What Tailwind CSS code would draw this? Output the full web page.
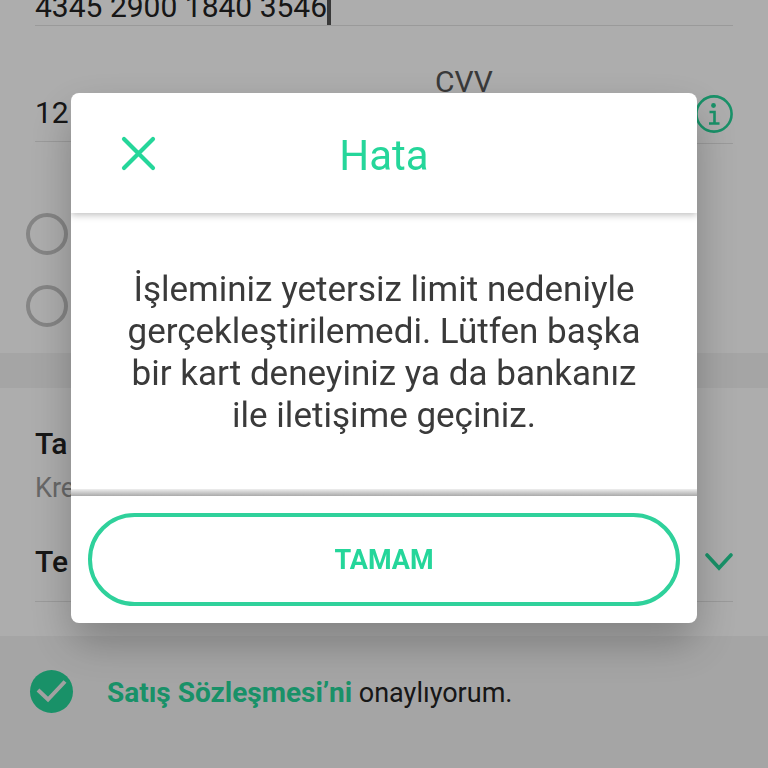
<!DOCTYPE html>
<html lang="tr">
<head>
    <meta charset="UTF-8">
    <meta name="viewport" content="width=device-width, initial-scale=1.0">
    <title>Hata</title>
    <script src="https://cdn.jsdelivr.net/npm/@tailwindcss/browser@4"></script>
</head>
<body class="min-h-screen bg-[#f4f4f4] font-['Roboto',sans-serif] text-[#222] overflow-hidden">
    <main class="bg-white">
        <!-- Card number -->
        <div class="px-[35px]">
            <div class="h-[26px] flex items-end overflow-hidden border-b border-[#e4e4e4]">
                <input type="text" aria-label="Kart numarası" value="4345 2900 1840 3546" class="field-sizing-content h-9 text-[30px] leading-9 outline-none">
                <span class="h-9 w-1 bg-[#555]"></span>
            </div>
        </div>

        <!-- Expiry date and CVV -->
        <div class="px-[35px] pt-[38px] grid grid-cols-[1fr_298px] gap-x-24">
            <div class="pt-[31px] border-b border-[#e4e4e4] h-[78px]">
                <input type="text" aria-label="Ay" value="12" class="w-full text-[30px] leading-9 outline-none">
            </div>
            <div class="border-b border-[#e4e4e4] h-20">
                <label for="cvv" class="block h-[31px] text-[30px] leading-9 text-[#555]">CVV</label>
                <div class="flex items-center">
                    <input type="text" id="cvv" class="min-w-0 grow h-9 text-[30px] leading-9 outline-none">
                    <button type="button" aria-label="Bilgi" class="text-[#25d69a]">
                        <svg class="size-[38px]" viewBox="0 0 38 38" fill="none" stroke="currentColor" stroke-width="2.6">
                            <circle cx="19" cy="19" r="17.6"/>
                            <circle cx="18.500" cy="10.500" r="2.4" fill="currentColor" stroke="none"/>
                            <path d="M14.500 17h5v11M14 28.500h10.500"/>
                        </svg>
                    </button>
                </div>
            </div>
        </div>

        <div class="px-[26px] pt-[69px] pb-[26px] flex flex-col gap-[30px]">
            <input type="radio" name="secim" aria-label="Seçenek 1" class="appearance-none size-[42px] rounded-full border-4 border-[#c4c4c4]">
            <input type="radio" name="secim" aria-label="Seçenek 2" class="appearance-none size-[42px] rounded-full border-4 border-[#c4c4c4]">
        </div>

        <div class="h-[35px] bg-[#f4f4f4]"></div>

        <!-- Installment and delivery -->
        <div class="px-[35px] pt-[38px] pb-[34px]">
            <p class="text-[30px] leading-9 font-medium">Ta</p>
            <p class="pt-2 text-[27px] leading-9 text-[#999]">Kre</p>
            <div class="pt-9 pb-[19px] flex items-center justify-between border-b border-[#e4e4e4]">
                <p class="text-[30px] leading-10 font-medium">Te</p>
                <button type="button" aria-label="Aç" class="text-[#25d69a]">
                    <svg class="w-7 h-5" viewBox="0 0 28 20" fill="none" stroke="currentColor" stroke-width="3.6" stroke-linecap="round">
                        <path d="M2 3l12 13L26 3"/>
                    </svg>
                </button>
            </div>
        </div>
    </main>

    <footer class="px-[30px] pt-[34px] flex items-center gap-[34px]">
        <span class="grid shrink-0">
            <input type="checkbox" id="sozlesme" checked class="col-start-1 row-start-1 appearance-none size-[43px] rounded-full bg-[#25d69a]">
            <svg class="col-start-1 row-start-1 size-[43px] pointer-events-none" viewBox="0 0 43 43" fill="none" stroke="#eee" stroke-width="4">
                <path d="M8 20l10 9.500L35 11.500"/>
            </svg>
        </span>
        <label for="sozlesme" class="pt-0.5 text-[27px] leading-9"><a href="#" class="text-[28px] font-bold text-[#25d69a]">Satış Sözleşmesi’ni</a> onaylıyorum.</label>
    </footer>

    <!-- Error dialog -->
    <div class="fixed inset-0 px-[71px] pt-[93px] bg-black/32">
        <div role="dialog" aria-labelledby="title" class="bg-white rounded-lg shadow-[0_20px_44px_rgba(0,0,0,0.26)]">
            <div class="overflow-hidden rounded-lg">
                <header class="h-[120px] px-[49px] grid grid-cols-[38px_1fr_38px] items-center shadow-[0_2px_7px_rgba(0,0,0,0.26)]">
                    <button type="button" aria-label="Kapat" class="pt-0.5 text-[#25d69a]">
                        <svg class="size-[38px]" viewBox="0 0 38 38" fill="none" stroke="currentColor" stroke-width="4.2" stroke-linecap="round">
                            <path d="M4 4l29 29M33 4L4 33"/>
                        </svg>
                    </button>
                    <h1 id="title" class="pt-1.5 text-center text-[42px] leading-[50px] text-[#25d69a]">Hata</h1>
                </header>
                <div class="px-12 pt-14 pb-[52px] text-center text-[35px] leading-[42px] text-[#3a3a3a]">
                    İşleminiz yetersiz limit nedeniyle gerçekleştirilemedi. Lütfen başka bir kart deneyiniz ya da bankanız ile iletişime geçiniz.
                </div>
                <div class="h-[7px] bg-linear-to-b from-[#eee] to-[#aaa]"></div>
                <footer class="px-[17px] pt-[17px] pb-[17px]">
                    <button type="button" class="w-full h-[93px] pt-0.5 rounded-full border-4 border-[#2fd19b] text-[27px] font-bold text-[#25d69a]">TAMAM</button>
                </footer>
            </div>
        </div>
    </div>
</body>
</html>
